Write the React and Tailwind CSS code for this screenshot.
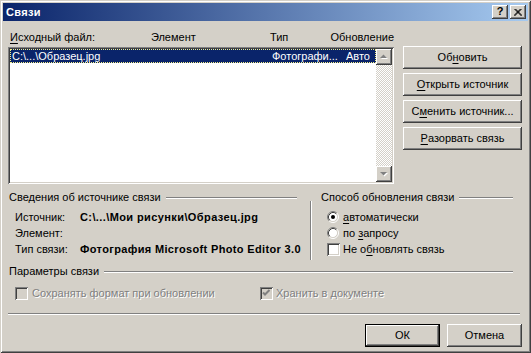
import React from "react";

const raised =
  "bg-[#d4d0c8] shadow-[inset_-1px_-1px_0_#404040,inset_1px_1px_0_#ffffff,inset_-2px_-2px_0_#808080,inset_2px_2px_0_#d4d0c8]";
const sunken =
  "shadow-[inset_1px_1px_0_#808080,inset_-1px_-1px_0_#ffffff,inset_2px_2px_0_#404040,inset_-2px_-2px_0_#d4d0c8]";
const hline = "h-[2px] border-t border-t-[#808080] border-b border-b-white";
const disabledText = "text-[#808080] [text-shadow:1px_1px_0_#ffffff]";

function Radio({ checked }) {
  return (
    <svg width="12" height="12" viewBox="0 0 12 12" className="shrink-0">
      <circle cx="6" cy="6" r="4.5" fill="#ffffff" />
      <path d="M2.11 9.89 A5.5 5.5 0 0 1 9.89 2.11" stroke="#808080" fill="none" />
      <path d="M9.89 2.11 A5.5 5.5 0 0 1 2.11 9.89" stroke="#ffffff" fill="none" />
      <path d="M2.82 9.18 A4.5 4.5 0 0 1 9.18 2.82" stroke="#404040" fill="none" />
      <path d="M9.18 2.82 A4.5 4.5 0 0 1 2.82 9.18" stroke="#d4d0c8" fill="none" />
      {checked && <circle cx="6" cy="6" r="2" fill="#000000" />}
    </svg>
  );
}

function Check({ checked, disabled }) {
  return (
    <div
      className={`w-[13px] h-[13px] shrink-0 flex items-center justify-center ${sunken} ${
        disabled ? "bg-[#d4d0c8]" : "bg-white"
      }`}
    >
      {checked && (
        <svg width="13" height="13" viewBox="0 0 13 13">
          <path d="M3 5.5 L5 7.5 L9.5 3" stroke={disabled ? "#808080" : "#000"} strokeWidth="2" fill="none" />
        </svg>
      )}
    </div>
  );
}

function Btn({ children, className = "" }) {
  return (
    <div className={`h-[23px] flex items-center justify-center ${raised} ${className}`}>{children}</div>
  );
}

function ArrowBtn({ up }) {
  return (
    <div className={`w-[16px] h-[16px] shrink-0 ${raised}`}>
      <svg width="16" height="16" viewBox="0 0 16 16">
        {up ? (
          <>
            <polygon points="5,10 12,10 8.5,6.5" fill="#ffffff" />
            <polygon points="4,9 11,9 7.5,5.5" fill="#808080" />
          </>
        ) : (
          <>
            <polygon points="5,7 12,7 8.5,10.5" fill="#ffffff" />
            <polygon points="4,6 11,6 7.5,9.5" fill="#808080" />
          </>
        )}
      </svg>
    </div>
  );
}

export default function App() {
  return (
    <div
      className="w-[531px] h-[353px] overflow-hidden bg-[#d4d0c8] p-[3px] flex flex-col text-[11px] leading-[13px] text-black font-['Liberation_Sans',Arial,sans-serif] shadow-[inset_1px_1px_0_#d4d0c8,inset_-1px_-1px_0_#404040,inset_2px_2px_0_#ffffff,inset_-2px_-2px_0_#808080]"
    >
      {/* Title bar */}
      <div className="h-[18px] shrink-0 flex items-center bg-[linear-gradient(to_right,#0a246a,#a6caf0)] pl-[3px] pr-[2px]">
        <span className="text-white font-bold text-[11px] tracking-[0.3px] flex-1">Связи</span>
        <div className={`w-[16px] h-[14px] flex items-center justify-center ${raised}`}>
          <span className="font-bold text-[11px] leading-[11px] pb-[1px]">?</span>
        </div>
        <div className={`ml-[2px] w-[16px] h-[14px] flex items-center justify-center ${raised}`}>
          <svg width="8" height="7" viewBox="0 0 8 7">
            <path d="M0.5 0 L7.5 7 M1.5 0 L8 6.5 M7.5 0 L0.5 7 M6.5 0 L0 6.5" stroke="#000" strokeWidth="1" />
          </svg>
        </div>
      </div>

      <div className="flex-1 px-[5px] flex flex-col">
        {/* Top section */}
        <div className="flex">
          <div className="w-[386px] flex flex-col">
            <div className="mt-[10px] h-[13px] flex pl-[2px] whitespace-nowrap">
              <span className="w-[142px]">
                <span className="underline underline-offset-2">И</span>сходный файл:
              </span>
              <span className="w-[120px]">Элемент</span>
              <span className="w-[61px]">Тип</span>
              <span>Обновление</span>
            </div>
            <div className={`mt-[3px] h-[137px] bg-white p-[2px] flex ${sunken}`}>
              <div className="flex-1 flex flex-col">
                <div className="h-[14px] bg-[#0a246a] text-white border border-dotted border-[#f5f08a] flex items-center pl-[1px] whitespace-nowrap">
                  <span className="w-[260px]">C:\...\Образец.jpg</span>
                  <span className="w-[74px]">Фотографи...</span>
                  <span>Авто</span>
                </div>
              </div>
              <div className="w-[16px] flex flex-col">
                <ArrowBtn up />
                <div className="flex-1 bg-[repeating-conic-gradient(#ffffff_0_25%,#d4d0c8_0_50%)] bg-[length:2px_2px]" />
                <ArrowBtn />
              </div>
            </div>
          </div>
          <div className="ml-[9px] w-[119px] pt-[25px] flex flex-col gap-[4px]">
            <Btn>
              Об<span className="underline underline-offset-2">н</span>овить
            </Btn>
            <Btn>
              <span className="underline underline-offset-2">О</span>ткрыть источник
            </Btn>
            <Btn>
              С<span className="underline underline-offset-2">м</span>енить источник...
            </Btn>
            <Btn>
              <span className="underline underline-offset-2">Р</span>азорвать связь
            </Btn>
          </div>
        </div>

        {/* Groups */}
        <div className="mt-[7px] flex w-[505px]">
          <div className="w-[302px] flex flex-col">
            <div className="h-[13px] flex items-center pl-[1px]">
              <span className="whitespace-nowrap">Сведения об источнике связи</span>
              <div className={`flex-1 ml-[5px] mr-[13px] ${hline}`} />
            </div>
            <div className="mt-[5px] pl-[7px] flex flex-col">
              <div className="h-[16px] flex items-center whitespace-nowrap">
                <span className="w-[65px]">Источник:</span>
                <span className="font-bold tracking-[0.4px]">C:\...\Мои рисунки\Образец.jpg</span>
              </div>
              <div className="h-[16px] flex items-center">
                <span className="w-[65px]">Элемент:</span>
              </div>
              <div className="h-[16px] flex items-center whitespace-nowrap">
                <span className="w-[65px]">Тип связи:</span>
                <span className="font-bold tracking-[0.35px]">Фотография Microsoft Photo Editor 3.0</span>
              </div>
            </div>
          </div>
          <div className="mt-[10px] h-[59px] w-[2px] border-l border-l-[#808080] border-r border-r-white" />
          <div className="flex-1 flex flex-col">
            <div className="h-[13px] flex items-center pl-[9px]">
              <span className="whitespace-nowrap">Способ обновления связи</span>
              <div className={`flex-1 ml-[5px] ${hline}`} />
            </div>
            <div className="mt-[5px] pl-[15px] flex flex-col">
              <div className="h-[16px] flex items-center gap-[4px]">
                <Radio checked />
                <span>
                  <span className="underline underline-offset-2">а</span>втоматически
                </span>
              </div>
              <div className="h-[16px] flex items-center gap-[4px]">
                <Radio />
                <span>
                  по <span className="underline underline-offset-2">з</span>апросу
                </span>
              </div>
              <div className="h-[16px] flex items-center gap-[3px]">
                <Check />
                <span>
                  Не о<span className="underline underline-offset-2">б</span>новлять связь
                </span>
              </div>
            </div>
          </div>
        </div>

        {/* Параметры связи */}
        <div className="mt-[5px] h-[13px] flex items-center pl-[1px] w-[505px]">
          <span className="whitespace-nowrap">Параметры связи</span>
          <div className={`flex-1 ml-[5px] ${hline}`} />
        </div>
        <div className="mt-[7px] h-[16px] flex items-center pl-[7px] whitespace-nowrap">
          <div className="w-[245px] flex items-center gap-[4px]">
            <Check disabled />
            <span className={disabledText}>Сохранять формат при обновлении</span>
          </div>
          <div className="flex items-center gap-[3px]">
            <Check disabled checked />
            <span className={disabledText}>Хранить в документе</span>
          </div>
        </div>

        <div className={`mt-[12px] w-[512px] ${hline}`} />

        <div className="mt-[9px] flex justify-end gap-[7px] w-[514px]">
          <div className="w-[75px] h-[23px] border border-black">
            <div className={`w-full h-full flex items-center justify-center ${raised}`}>ОК</div>
          </div>
          <Btn className="w-[75px]">Отмена</Btn>
        </div>
      </div>
    </div>
  );
}
